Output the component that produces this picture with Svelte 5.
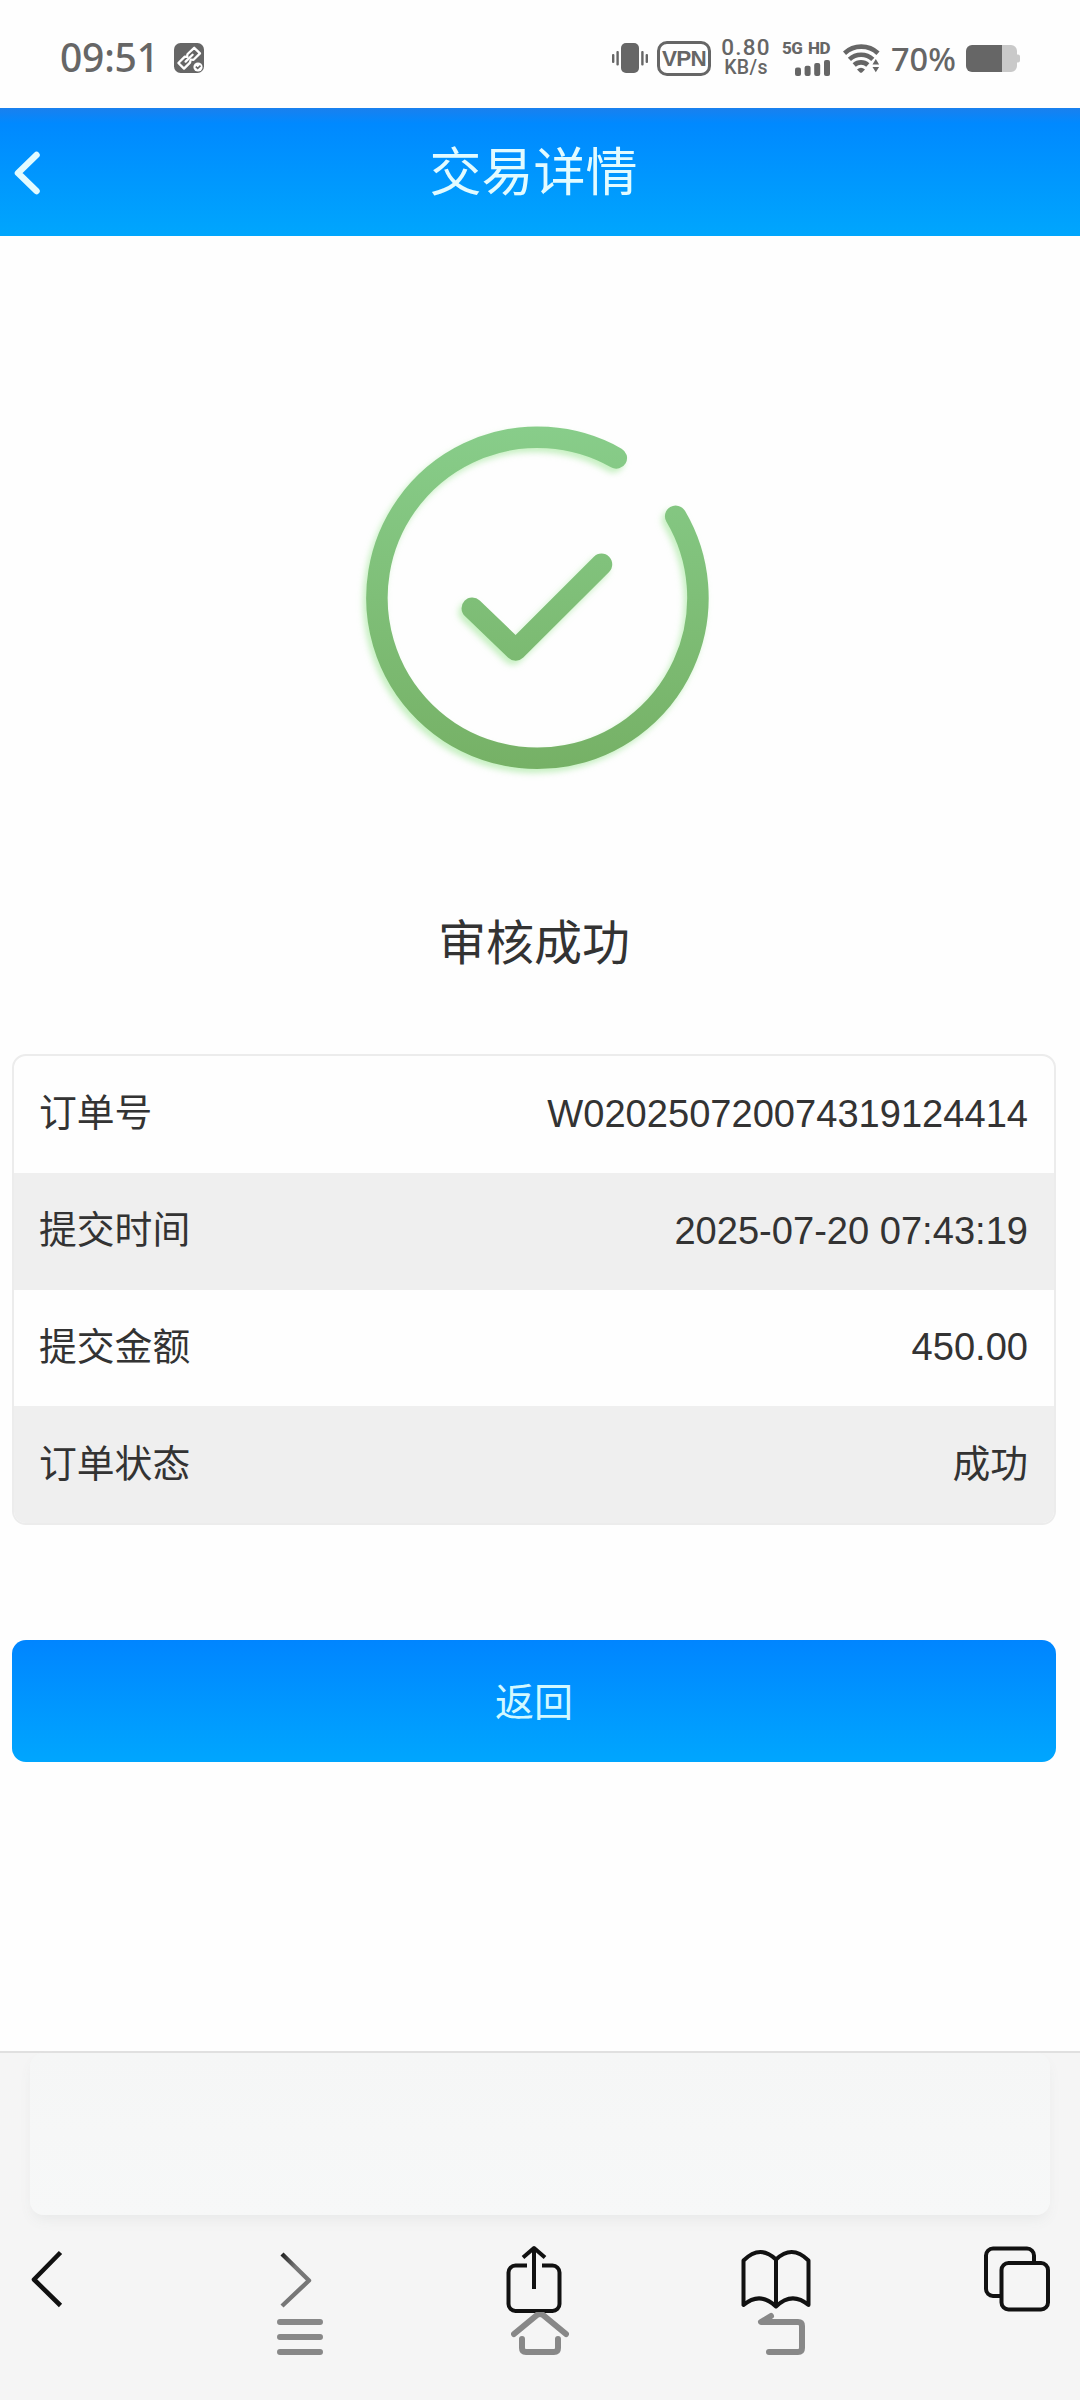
<script>
  const rows = [
    { label: '订单号', value: 'W020250720074319124414' },
    { label: '提交时间', value: '2025-07-20 07:43:19' },
    { label: '提交金额', value: '450.00' },
    { label: '订单状态', value: '成功', cjk: true }
  ];
</script>

<div class="screen">
  <div class="status">
    <span class="time">09:51</span>
    <svg class="link" width="30" height="30" viewBox="0 0 30 30">
      <rect width="30" height="30" rx="6.5" fill="#666" />
      <g fill="none" stroke="#fff" stroke-width="2.3" stroke-linejoin="round" stroke-linecap="round">
        <path d="M13.2 12.4 13.6 11 20.2 4.8 26 10.4 19.6 16.8 16.8 16.6" />
        <path d="M16.4 18 16 19.6 10 25.6 4.4 20 10.8 13.6 13.4 13.8" />
        <path d="M11.6 18.6 18.6 11.8" />
      </g>
      <circle cx="24" cy="24" r="4.6" fill="#fff" />
      <path d="M21.8 23.6 23.7 25.4 26.5 22.6" fill="none" stroke="#666" stroke-width="1.5" />
    </svg>
    <div class="right">
      <svg class="vib" width="36" height="30" viewBox="0 0 36 30" fill="#666">
        <rect x="9" width="18" height="30" rx="5" />
        <rect x="0" y="11" width="2.4" height="9" rx="1" />
        <rect x="4.4" y="8" width="2.4" height="14.5" rx="1" />
        <rect x="29.2" y="8" width="2.4" height="14.5" rx="1" />
        <rect x="33.6" y="11" width="2.4" height="9" rx="1" />
      </svg>
      <span class="vpn">VPN</span>
      <div class="speed"><span>0.80</span><span class="unit">KB/s</span></div>
      <div class="cell">
        <span class="net"><span>5G</span><span>HD</span></span>
        <svg width="35" height="16" viewBox="0 0 35 16" fill="#666">
          <rect x="0" y="7.5" width="6" height="8.5" rx="2" />
          <rect x="9.6" y="5.8" width="6" height="10.2" rx="2" />
          <rect x="19.2" y="3" width="6" height="13" rx="2" />
          <rect x="29" y="0" width="6" height="16" rx="2" />
        </svg>
      </div>
      <svg class="wifi" width="37" height="29" viewBox="0 0 37 29">
        <g fill="none" stroke="#666" stroke-width="4.6">
          <path d="M1.5 9.2a24.5 24.5 0 0 1 33.5 0" />
          <path d="M6.4 15.4a17 17 0 0 1 23.4 0" />
          <path d="M11.2 21a10 10 0 0 1 13.6 0" />
        </g>
        <path d="M14 25.4q4-3.4 8 0l-3 3q-1 .8-2 0z" fill="#666" />
        <path d="M27.6 21.4 32.6 12.6l5 8.8v7.6h-10z" fill="#fefefe" />
        <path d="M29.5 20.6 32.8 15l3.3 5.6zM29.5 23h6.6L32.8 28.3z" fill="#666" />
      </svg>
      <span class="pct">70%</span>
      <svg class="batt" width="54" height="27" viewBox="0 0 54 27">
        <path d="M36 0h9a6 6 0 0 1 6 6v3.5h1a2 2 0 0 1 2 2v4a2 2 0 0 1-2 2h-1V21a6 6 0 0 1-6 6h-9z" fill="#c9c9c9" />
        <path d="M36 0H6a6 6 0 0 0-6 6v15a6 6 0 0 0 6 6h30z" fill="#666" />
      </svg>
    </div>
  </div>

  <header>
    <svg width="26" height="44" viewBox="0 0 26 44">
      <path d="M22.5 4 4 22 22.5 40" fill="none" stroke="#e2fbff" stroke-width="6.5" stroke-linejoin="round" stroke-linecap="round" />
    </svg>
    <h1>交易详情</h1>
  </header>

  <main>
    <svg class="success" width="360" height="360" viewBox="0 0 360 360">
      <defs>
        <linearGradient id="green" gradientUnits="userSpaceOnUse" x1="0" y1="10" x2="0" y2="350">
          <stop offset="0" stop-color="#88cd8a" />
          <stop offset="1" stop-color="#76b166" />
        </linearGradient>
      </defs>
      <g fill="none" stroke="url(#green)" stroke-width="21.5" stroke-linecap="round" stroke-linejoin="round">
        <path d="M260.3 41A160.500 160.500 0 1 0 319.700 99.300" />
        <path d="M116.300 191.300 159.700 233 245.500 147.300" />
      </g>
    </svg>
    <h2>审核成功</h2>
    <div class="card">
      {#each rows as row}
        <div class="row"><span class="cjk">{row.label}</span><span class:cjk={row.cjk}>{row.value}</span></div>
      {/each}
    </div>
    <button>返回</button>
  </main>

  <footer>
    <div class="address"></div>
    <div class="tools">
      <svg width="32" height="58" viewBox="0 0 32 58">
        <path d="M29.5 2.5 3 29.5 29.5 55.5" fill="none" stroke="#111" stroke-width="4.6" stroke-linejoin="round" />
      </svg>
      <svg width="32" height="58" viewBox="0 0 32 58">
        <defs>
          <linearGradient id="fade" x1="0" y1="0" x2="0.5" y2="0.6">
            <stop offset="0" stop-color="#222" />
            <stop offset="0.65" stop-color="#777" />
          </linearGradient>
        </defs>
        <path d="M2 4 29 30.5 2 56" fill="none" stroke="url(#fade)" stroke-width="4.4" stroke-linejoin="round" />
      </svg>
      <svg width="56" height="68" viewBox="0 0 56 68">
        <path d="M21 20.5H9.5a7 7 0 0 0-7 7V59a7 7 0 0 0 7 7h37a7 7 0 0 0 7-7V27.5a7 7 0 0 0-7-7H36M28 3v41M17 12.5 28 3 39 12.5" fill="none" stroke="#111" stroke-width="4" stroke-linejoin="round" />
      </svg>
      <svg width="70" height="60" viewBox="0 0 70 60">
        <path d="M35 57.5Q19 42 2.500 56V11.5Q19-5 35 10.5Q51-5 67.500 11.5V56Q51 42 35 57.5V10.5" fill="none" stroke="#111" stroke-width="4" stroke-linejoin="round" />
      </svg>
      <svg width="66" height="66" viewBox="0 0 66 66">
        <g fill="none" stroke="#111" stroke-width="4">
          <path d="M17 50H9a7 7 0 0 1-7-7V9.5a7 7 0 0 1 7-7h34a7 7 0 0 1 7 7V17" />
          <rect x="17.5" y="17" width="46.5" height="46.5" rx="7" />
        </g>
      </svg>
    </div>
    <nav>
      <svg width="46" height="44" viewBox="0 0 46 44">
        <path d="M3 10h40M3 25h40M3 40h40" />
      </svg>
      <svg width="58" height="44" viewBox="0 0 58 44">
        <path d="M3 22 26 3Q29 .8 32 3L55 22M11 27v9q0 4 4 4h28q4 0 4-4v-9" />
      </svg>
      <svg width="50" height="44" viewBox="0 0 50 44">
        <path d="M14 4 4 10h37q4 0 4 4v22q0 4-4 4H12" />
      </svg>
    </nav>
  </footer>
</div>

<style>
  :global(body) { margin: 0; background: #fefefe; }
  .screen {
    width: 1080px; height: 2400px; overflow: hidden;
    display: flex; flex-direction: column;
    background: #fefefe; color: #333;
    font-family: "Liberation Sans", "Noto Sans CJK SC", sans-serif;
  }
  .status {
    box-sizing: border-box; height: 108px; padding: 8px 60px 0 60px;
    display: flex; align-items: center; color: #666;
    font-family: "Noto Sans", sans-serif;
  }
  .time { width: 98px; padding-bottom: 3px; font-size: 39px; font-weight: 550; letter-spacing: -.2px; line-height: 50px; white-space: nowrap; }
  .link { margin-left: 16px; }
  .right { margin-left: auto; display: flex; align-items: center; }
  .vpn {
    box-sizing: border-box; width: 54px; height: 35px; margin-left: 9px;
    border: 3px solid #666; border-radius: 10px;
    font: 700 22.5px/30px "Liberation Sans", sans-serif; letter-spacing: -.8px;
    text-align: center;
  }
  .speed {
    width: 50px; margin-left: 10px; display: flex; flex-direction: column;
    align-items: center; font: 500 22.5px/19px Roboto, sans-serif; letter-spacing: 1.2px;
  }
  .unit { font-size: 19.5px; line-height: 21px; letter-spacing: .3px; }
  .cell {
    width: 48px; height: 35px; margin-left: 11px; display: flex;
    flex-direction: column; align-items: flex-end; justify-content: space-between;
  }
  .net { width: 48px; display: flex; justify-content: space-between; font: 800 17px/14px Roboto, sans-serif; letter-spacing: -.5px; }
  .wifi { margin-left: 13px; }
  .pct { width: 66px; margin-left: 11px; padding-top: 1px; font-size: 32.5px; line-height: 40px; font-weight: 500; white-space: nowrap; }
  .batt { margin-left: 9px; }
  header {
    height: 128px; display: flex; align-items: center;
    background: linear-gradient(#1a80ee 0, #0089ff 12%, #00a6fd 100%);
  }
  header svg { margin: 1px 0 0 14px; }
  h1 { width: 987px; margin: 1px 0 0; text-align: center; font-size: 52px; line-height: 76px; font-weight: 400; color: #e2fbff; }
  main { height: 1815px; display: flex; flex-direction: column; padding: 0 24px 0 12px; }
  .success { align-self: center; margin: 181px 0 0 4px; filter: drop-shadow(-3px 4px 3px #a8e8a0aa); }
  h2 { margin: 127px 0 0; text-align: center; font-size: 48px; line-height: 80px; font-weight: 400; }
  .card { margin-top: 70px; border: 2px solid #ececec; border-radius: 14px; overflow: hidden; }
  .row {
    height: 116.8px; display: flex; align-items: center; justify-content: space-between;
    padding: 0 26px 0 25px; font-size: 38.1px;
  }
  .cjk { padding-bottom: 9px; font-size: 37.8px; }
  .row:nth-child(even) { background: #efefef; }
  button {
    height: 122px; margin-top: 115px; padding: 0 0 5px; border: 0; border-radius: 14px;
    font: 400 39px "Noto Sans CJK SC", sans-serif; color: #d2f8ff;
    background: linear-gradient(#0085ff, #00a6fe);
  }
  footer {
    position: relative; flex: 1; border-top: 2px solid #e0e0e0;
    background: #f5f5f5;
  }
  .address {
    height: 162px; margin: 0 30px; border-radius: 14px;
    background: linear-gradient(#f5f6f6, #f7f8f8); box-shadow: 0 7px 14px -3px #e7e8e8;
  }
  .tools {
    height: 128px; display: grid; align-items: center; padding-left: 31px;
    grid-template-columns: 249px 226px 235px 243px 66px;
  }
  nav {
    position: absolute; left: 277px; top: 259px; width: 530px;
    display: flex; justify-content: space-between;
    fill: none; stroke: #888; stroke-width: 6; stroke-linecap: round; stroke-linejoin: round;
  }
</style>
